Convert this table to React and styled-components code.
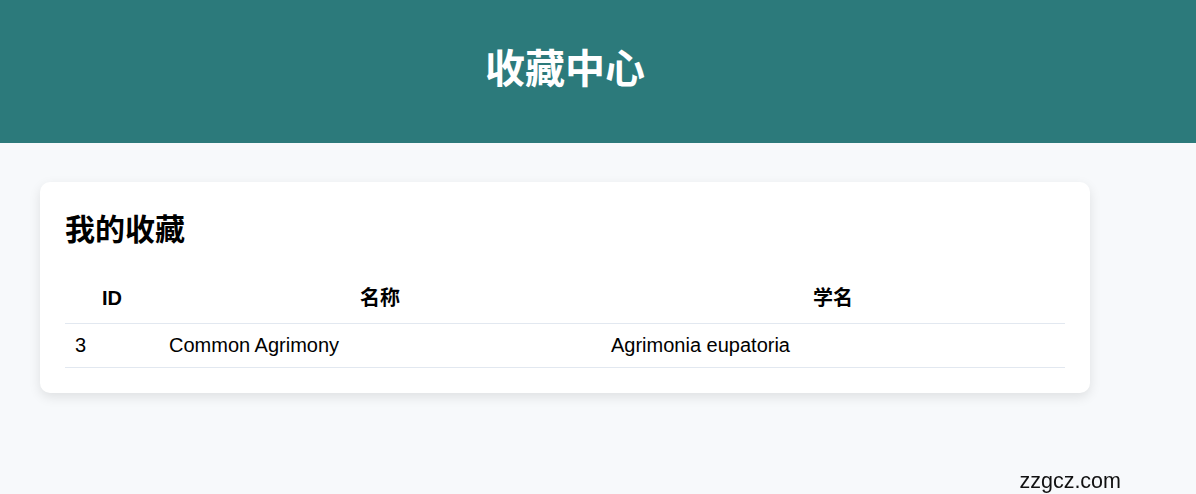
import React from 'react';
import styled, { createGlobalStyle } from 'styled-components';

const GlobalStyle = createGlobalStyle`
  * {
    box-sizing: border-box;
  }
  body {
    margin: 0;
    font-family: "Liberation Sans", Arial, "Noto Sans CJK SC", sans-serif;
    color: #000000;
    background-color: #f7f9fb;
  }
`;

const Header = styled.header`
  display: flex;
  align-items: center;
  height: 143px;
  padding: 0 40px 6px;
  background-color: #2c7a7b;
  color: #ffffff;
`;

const HeaderInner = styled.div`
  width: 1050px;
  text-align: center;
`;

const Title = styled.h1`
  margin: 0;
  font-size: 40px;
  line-height: 48px;
  font-weight: 700;
`;

const Main = styled.main`
  padding: 39px 40px;
`;

const Card = styled.section`
  width: 1050px;
  padding: 25px;
  background-color: #ffffff;
  border-radius: 10px;
  box-shadow: 0 4px 12px rgba(0, 0, 0, 0.1);
`;

const CardTitle = styled.h2`
  margin: 5px 0 27px;
  font-size: 30px;
  line-height: 36px;
  font-weight: 700;
`;

const Table = styled.table`
  width: 100%;
  border-collapse: collapse;
  font-size: 20px;
`;

const Th = styled.th`
  width: ${({ $w }) => $w};
  padding: 12px 10px 14px;
  line-height: 22px;
  font-weight: 700;
  text-align: center;
  border-bottom: 1px solid #e2e8f0;
`;

const Td = styled.td`
  padding: 11px 10px;
  line-height: 21px;
  text-align: left;
  border-bottom: 1px solid #e2e8f0;
`;

const Watermark = styled.div`
  position: fixed;
  right: 75px;
  bottom: 0;
  font-size: 21.5px;
  color: #111111;
`;

const favorites = [
  { id: 3, name: 'Common Agrimony', latin: 'Agrimonia eupatoria' },
];

export default function App() {
  return (
    <>
      <GlobalStyle />
      <Header>
        <HeaderInner>
          <Title>收藏中心</Title>
        </HeaderInner>
      </Header>
      <Main>
        <Card>
          <CardTitle>我的收藏</CardTitle>
          <Table>
            <thead>
              <tr>
                <Th $w="94px">ID</Th>
                <Th $w="442px">名称</Th>
                <Th>学名</Th>
              </tr>
            </thead>
            <tbody>
              {favorites.map((f) => (
                <tr key={f.id}>
                  <Td>{f.id}</Td>
                  <Td>{f.name}</Td>
                  <Td>{f.latin}</Td>
                </tr>
              ))}
            </tbody>
          </Table>
        </Card>
      </Main>
      <Watermark>zzgcz.com</Watermark>
    </>
  );
}
